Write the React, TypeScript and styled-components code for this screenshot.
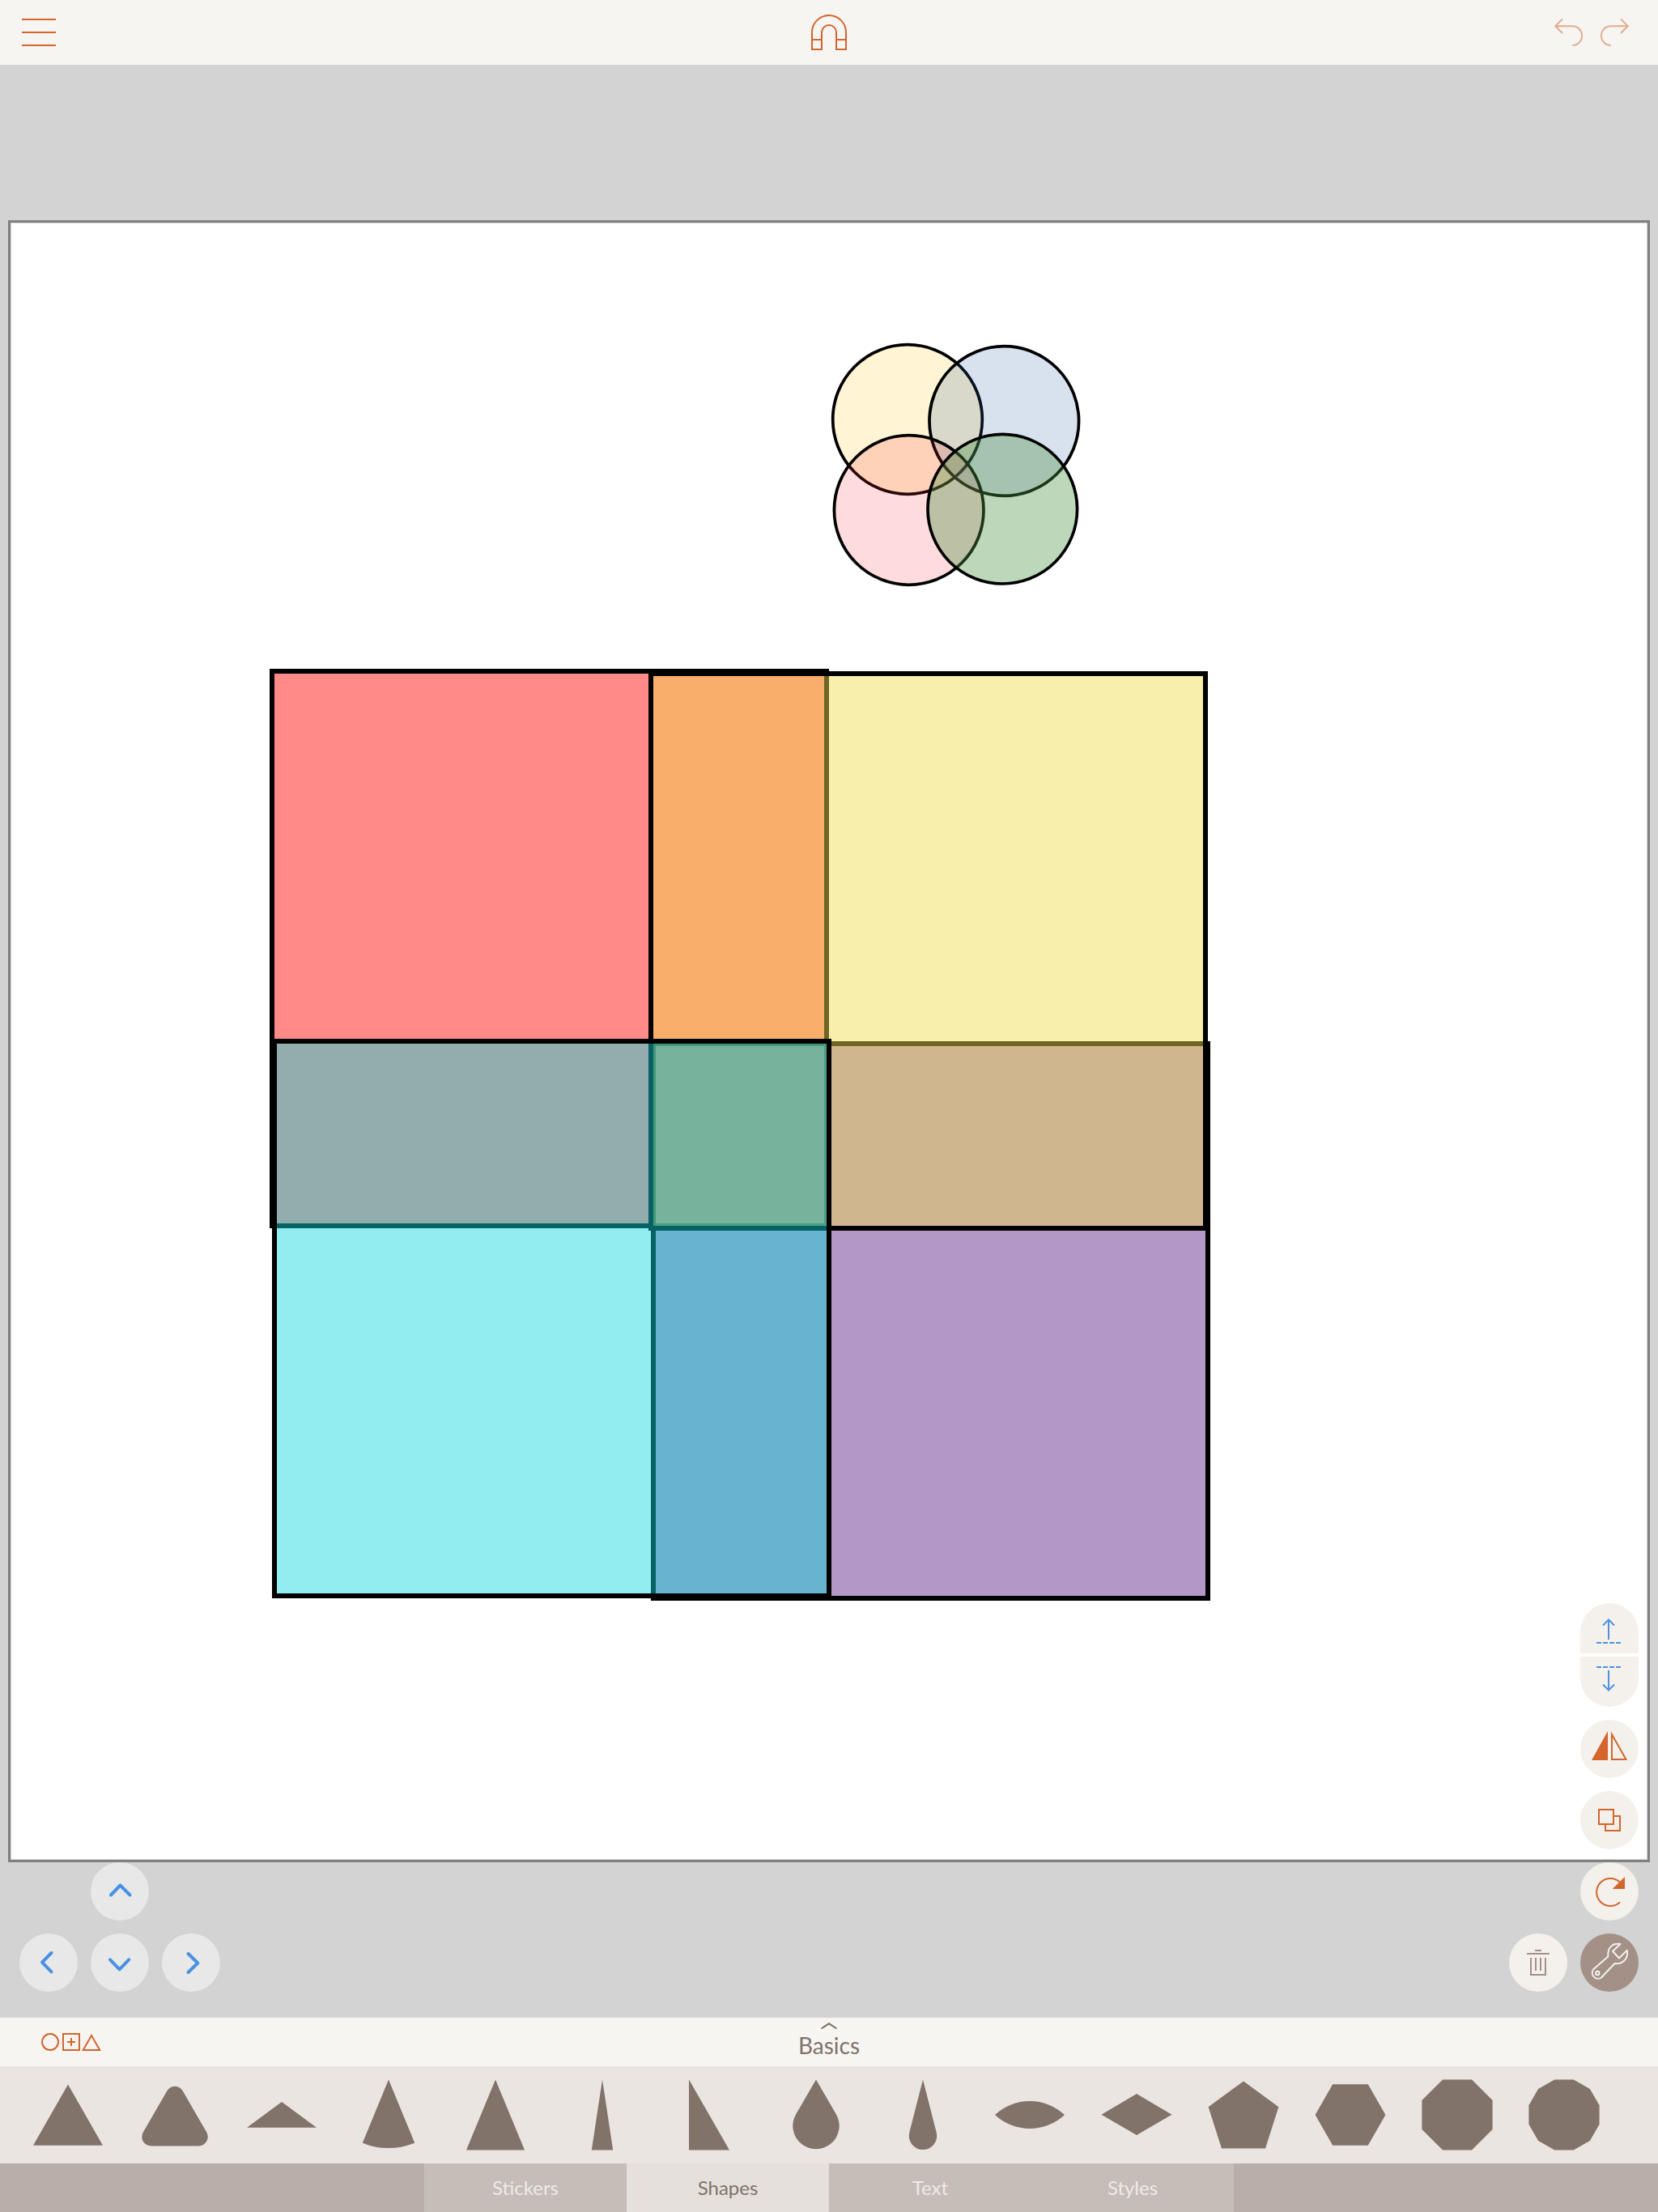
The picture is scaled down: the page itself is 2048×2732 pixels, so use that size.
import React from "react";
import styled, { createGlobalStyle, css } from "styled-components";

const color = {
  bar: "#f6f5f1",
  workspace: "#d3d3d3",
  strip: "#eae5e1",
  tabBar: "#b9aeaa",
  tab: "#c6bdb8",
  tabActive: "#e5e0dc",
  tabText: "#eeeae7",
  brown: "#81726a",
  taupe: "#a39187",
  orange: "#d4652d",
  blue: "#4a90e2",
  tool: "#f4f1ec",
  pad: "#e8e8e8",
};

const GlobalStyle = createGlobalStyle`
  *, *::before, *::after { box-sizing: border-box; }
  body { margin: 0; }
  button { margin: 0; padding: 0; border: 0; background: none; font: inherit; color: inherit; cursor: pointer; }
  svg { display: block; }
`;

const Screen = styled.div`
  display: flex;
  flex-direction: column;
  min-height: 100vh;
  font-family: Lato, "Open Sans", sans-serif;
  color: ${color.brown};
`;

const TopBar = styled.header`
  display: grid;
  grid-template-columns: 1fr auto 1fr;
  align-items: center;
  height: 80px;
  padding: 0 27px;
  background: ${color.bar};
  color: ${color.orange};
`;

const History = styled.div`
  display: flex;
  justify-content: flex-end;
  gap: 22px;
  padding-right: 9px;
`;

const IconButton = styled.button<{ $faded?: boolean }>`
  display: flex;
  justify-self: start;
  opacity: ${(p) => (p.$faded ? 0.5 : 1)};
`;

const LineIcon = styled.svg`
  fill: none;
  stroke: currentColor;
  stroke-width: 2px;
`;

const Workspace = styled.main`
  position: relative;
  flex: 1;
  display: grid;
  align-items: center;
  padding: 0 10px;
  background: ${color.workspace};
`;

const Artboard = styled.div`
  aspect-ratio: 1;
  background: #fff;
  border: 3px solid #808080;
  box-shadow: inset 0 0 0 1px #d8d8d8;
`;

const Drawing = styled.svg`
  width: 100%;
  height: 100%;
  stroke: #000;
`;

const NudgePad = styled.div`
  position: absolute;
  left: 24px;
  bottom: 32px;
  display: grid;
  grid-template-columns: repeat(3, 72px);
  gap: 16px;
`;

const PadButton = styled.button<{ $area: string }>`
  grid-area: ${(p) => p.$area};
  width: 72px;
  height: 72px;
  border-radius: 50%;
  background: ${color.pad};
`;

const PadIcon = styled.svg`
  fill: none;
  stroke: ${color.blue};
  stroke-width: 4px;
  stroke-linecap: round;
  stroke-linejoin: round;
`;

const Tools = styled.div`
  position: absolute;
  right: 24px;
  bottom: 32px;
  display: flex;
  flex-direction: column;
  align-items: flex-end;
  gap: 16px;
`;

const OrderGroup = styled.div`
  display: flex;
  flex-direction: column;
  gap: 4px;
`;

const OrderButton = styled.button<{ $end: "top" | "bottom" }>`
  width: 72px;
  height: 62px;
  background: ${color.tool};
  color: #5092dc;
  border-radius: ${(p) => (p.$end === "top" ? "36px 36px 0 0" : "0 0 36px 36px")};
`;

const ToolRow = styled.div`
  display: flex;
  gap: 16px;
`;

const ToolButton = styled.button<{ $tone?: "muted" | "active" }>`
  width: 72px;
  height: 72px;
  border-radius: 50%;
  background: ${color.tool};
  color: ${color.orange};
  ${(p) => p.$tone === "muted" && css`color: ${color.taupe};`}
  ${(p) =>
    p.$tone === "active" &&
    css`
      background: ${color.taupe};
      color: ${color.tool};
    `}
`;

const CategoryBar = styled.div`
  display: grid;
  grid-template-columns: 1fr auto 1fr;
  height: 60px;
  padding: 0 51px;
  background: ${color.bar};
`;

const AddShape = styled(IconButton)`
  align-items: center;
  color: ${color.orange};
`;

const Category = styled.button`
  display: flex;
  flex-direction: column;
  align-items: center;
  gap: 2px;
  padding-top: 6px;
  font-size: 28px;
  line-height: 36px;
`;

const ShapeStrip = styled.div`
  display: flex;
  height: 120px;
  padding: 0 18px;
  overflow: hidden;
  background: ${color.strip};
`;

const ShapeButton = styled.button`
  flex: none;
  width: 132px;
  height: 120px;
`;

const ShapeIcon = styled.svg`
  fill: ${color.brown};
`;

const TabBar = styled.nav`
  display: flex;
  justify-content: center;
  height: 60px;
  background: ${color.tabBar};
`;

const Tab = styled.button<{ $active: boolean }>`
  flex: 0 1 250px;
  font-size: 24px;
  line-height: 32px;
  background: ${(p) => (p.$active ? color.tabActive : color.tab)};
  color: ${(p) => (p.$active ? color.brown : color.tabText)};
`;

const shapes: { name: string; art: React.ReactNode }[] = [
  { name: "Triangle", art: <path d="M66 22.5 109 97.7H23Z" /> },
  {
    name: "Rounded triangle",
    art: (
      <path
        d="M66 36 95.5 87.2H36.5Z"
        stroke={color.brown}
        strokeWidth="22.4"
        strokeLinejoin="round"
      />
    ),
  },
  { name: "Wide triangle", art: <path d="M66 44 109 75.8H23Z" /> },
  { name: "Sector", art: <path d="M66 16.5 98.2 94.7A84 84 0 0 1 33.8 94.7Z" /> },
  { name: "Tall triangle", art: <path d="M66 16.5 102 103.4H30Z" /> },
  { name: "Spike", art: <path d="M66 16.5 79.2 103.4H52.8Z" /> },
  { name: "Right triangle", art: <path d="M41 16.5 91 103.4H41Z" /> },
  { name: "Drop", art: <path d="M66 16.5 90.8 59.2A28.7 28.7 0 1 1 41.2 59.2Z" /> },
  { name: "Thin drop", art: <path d="M66 16.5 82.7 81.8A17.2 17.2 0 1 1 49.3 81.8Z" /> },
  { name: "Lens", art: <path d="M23 60A62.9 62.9 0 0 1 109 60A62.9 62.9 0 0 1 23 60Z" /> },
  { name: "Diamond", art: <path d="M22.5 59.7 66 34 109.5 59.7 66 85Z" /> },
  { name: "Pentagon", art: <path d="M66 18.5 109.4 50.3 93 101.4H39L22.6 50.3Z" /> },
  { name: "Hexagon", art: <path d="M44.2 22.3H87.8L109.4 60 87.8 97.7H44.2L22.6 60Z" /> },
  {
    name: "Octagon",
    art: <path d="M48 16.4H84L109.6 42V78L84 103.6H48L22.4 78V42Z" />,
  },
  {
    name: "Dodecagon",
    art: (
      <path d="M54.3 16.4H77.7L97.9 28.1 109.6 48.3V71.7L97.9 91.9 77.7 103.6H54.3L34.1 91.9 22.4 71.7V48.3L34.1 28.1Z" />
    ),
  },
];

const nudges = [
  { name: "Move up", area: "1 / 2", d: "M25 40.5 36.5 28.5 48.5 40.5" },
  { name: "Move left", area: "2 / 1", d: "M39.5 24 28 35.7 39.5 47.3" },
  { name: "Move down", area: "2 / 2", d: "M24 32.3 35.6 44.3 47.2 32.3" },
  { name: "Move right", area: "2 / 3", d: "M32.5 25 44.3 36.5 32.5 48" },
];

const tabs = ["Stickers", "Shapes", "Text", "Styles"];

export default function App() {
  const [active, setActive] = React.useState("Shapes");

  return (
    <Screen>
      <GlobalStyle />

      <TopBar>
        <IconButton aria-label="Menu">
          <LineIcon width="42" height="34" viewBox="0 0 42 34">
            <path d="M0 1H42M0 17H42M0 33H42" />
          </LineIcon>
        </IconButton>
        <IconButton aria-label="Snapping">
          <LineIcon width="44" height="44" viewBox="0 0 44 44">
            <path d="M1 43V22A21 21 0 0 1 43 22V43H31V22A9 9 0 0 0 13 22V43ZM1 31H13M31 31H43" />
          </LineIcon>
        </IconButton>
        <History>
          <IconButton aria-label="Undo" $faded>
            <LineIcon width="35" height="34" viewBox="0 0 35 34">
              <path d="M10 0.5 1.2 9.2 10 18M1.2 9.2H22.3A11.9 11.9 0 0 1 22.3 33" />
            </LineIcon>
          </IconButton>
          <IconButton aria-label="Redo" $faded>
            <LineIcon width="35" height="34" viewBox="0 0 35 34">
              <path d="M25 0.5 33.8 9.2 25 18M33.8 9.2H12.7A11.9 11.9 0 0 0 12.7 33" />
            </LineIcon>
          </IconButton>
        </History>
      </TopBar>

      <Workspace>
        <Artboard>
          <Drawing viewBox="0 0 2022 2022">
            <g strokeWidth="3.7">
              <circle cx="1108" cy="243" r="92.3" fill="#fff4d4" />
              <circle cx="1227.3" cy="245" r="92.3" fill="rgb(43,92,163)" fillOpacity="0.184" />
              <circle cx="1109.7" cy="355" r="92.3" fill="rgb(247,40,56)" fillOpacity="0.17" />
              <circle cx="1225.3" cy="353.7" r="92.3" fill="rgb(76,146,68)" fillOpacity="0.37" />
            </g>
            <g strokeWidth="6">
              <rect x="323" y="554" width="685" height="685" fill="#ff8a88" />
              <rect x="794" y="1014" width="685" height="685" fill="rgb(89,28,133)" fillOpacity="0.46" />
              <rect x="791" y="557" width="685" height="685" fill="rgb(241,221,75)" fillOpacity="0.46" />
              <rect x="326" y="1011" width="685" height="685" fill="rgb(13,215,219)" fillOpacity="0.455" />
            </g>
          </Drawing>
        </Artboard>

        <NudgePad>
          {nudges.map((n) => (
            <PadButton key={n.name} aria-label={n.name} $area={n.area}>
              <PadIcon width="72" height="72" viewBox="0 0 72 72">
                <path d={n.d} />
              </PadIcon>
            </PadButton>
          ))}
        </NudgePad>

        <Tools>
          <OrderGroup>
            <OrderButton aria-label="Bring forward" $end="top">
              <LineIcon width="72" height="62" viewBox="0 0 72 62">
                <path d="M35 45V21M28 27.5 35 20.5 42 27.5" />
                <path d="M20 49H50" strokeDasharray="6 2" />
              </LineIcon>
            </OrderButton>
            <OrderButton aria-label="Send backward" $end="bottom">
              <LineIcon width="72" height="62" viewBox="0 0 72 62">
                <path d="M35 17V41M28 34.5 35 41.5 42 34.5" />
                <path d="M20 13H50" strokeDasharray="6 2" />
              </LineIcon>
            </OrderButton>
          </OrderGroup>
          <ToolButton aria-label="Flip">
            <LineIcon width="72" height="72" viewBox="0 0 72 72">
              <path d="M34 14V50H14Z" fill="currentColor" stroke="none" />
              <path d="M39 18V49H56.5Z" />
            </LineIcon>
          </ToolButton>
          <ToolButton aria-label="Duplicate">
            <LineIcon width="72" height="72" viewBox="0 0 72 72">
              <path d="M23 23H41V41H23ZM41 31H49V49H31V41" />
            </LineIcon>
          </ToolButton>
          <ToolButton aria-label="Rotate">
            <LineIcon width="72" height="72" viewBox="0 0 72 72">
              <path d="M49 49.2A17 17 0 1 1 49 24.8" />
              <path d="M55 18V33H39.7Z" fill="currentColor" stroke="none" />
            </LineIcon>
          </ToolButton>
          <ToolRow>
            <ToolButton aria-label="Delete" $tone="muted">
              <LineIcon width="72" height="72" viewBox="0 0 72 72">
                <path d="M32 21H40M22 25H50M27 30V51H45V30M33 30V46M39 30V46" />
              </LineIcon>
            </ToolButton>
            <ToolButton aria-label="Tools" $tone="active">
              <LineIcon width="72" height="72" viewBox="0 0 72 72" strokeLinejoin="round">
                <path d="M49.5 13C40 11.5 33.5 17 34.3 28.5L16 44.5A7.2 7.2 0 0 0 26 54.5L42.5 37C50 38.5 60 33 57.7 20.7L48 30.5 40 22Z" />
                <circle cx="21.3" cy="49" r="2.2" />
              </LineIcon>
            </ToolButton>
          </ToolRow>
        </Tools>
      </Workspace>

      <CategoryBar>
        <AddShape aria-label="Add shape">
          <LineIcon width="74" height="22" viewBox="0 0 74 22">
            <circle cx="11" cy="11" r="10" />
            <path d="M27 1H47V21H27ZM37 6V16M32 11H42M62 3 72.3 21H51.7Z" />
          </LineIcon>
        </AddShape>
        <Category>
          <LineIcon width="20" height="8" viewBox="0 0 20 8">
            <path d="M0.5 7.5 10 1.3 19.5 7.5" />
          </LineIcon>
          Basics
        </Category>
      </CategoryBar>

      <ShapeStrip>
        {shapes.map((s) => (
          <ShapeButton key={s.name} aria-label={s.name}>
            <ShapeIcon width="132" height="120" viewBox="0 0 132 120">
              {s.art}
            </ShapeIcon>
          </ShapeButton>
        ))}
      </ShapeStrip>

      <TabBar>
        {tabs.map((t) => (
          <Tab key={t} $active={t === active} aria-pressed={t === active} onClick={() => setActive(t)}>
            {t}
          </Tab>
        ))}
      </TabBar>
    </Screen>
  );
}
